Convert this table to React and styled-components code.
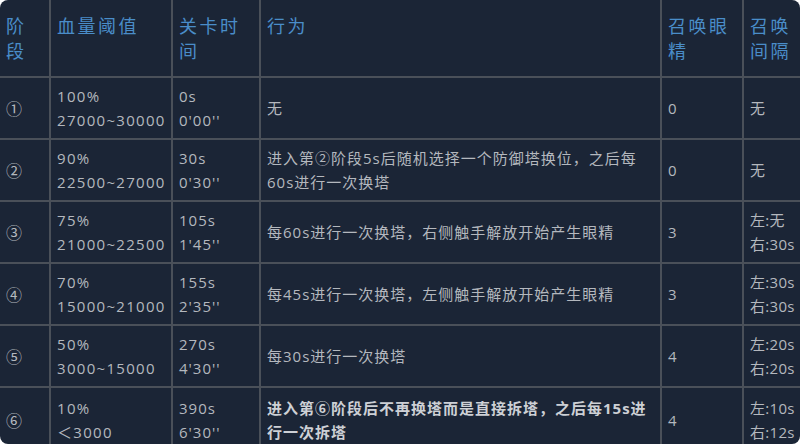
import React from "react";
import styled, { createGlobalStyle } from "styled-components";

const GlobalStyle = createGlobalStyle`
  html, body {
    margin: 0;
    padding: 0;
    background: #ffffff;
  }
`;

const Frame = styled.div`
  width: 800px;
  height: 444px;
  overflow: hidden;
  border-radius: 8px;
  background: #1b2536;
  font-family: "Open Sans", "Noto Sans CJK SC", sans-serif;
`;

const Table = styled.table`
  width: 800px;
  table-layout: fixed;
  border-collapse: collapse;
`;

const HeadCell = styled.th`
  height: 77px;
  box-sizing: border-box;
  padding: 14px 4px 0 6px;
  vertical-align: top;
  text-align: left;
  font-size: 18px;
  font-weight: 400;
  line-height: 25px;
  letter-spacing: 2.5px;
  color: #4a8dc9;
  border-right: 2px solid #4a5059;
  border-bottom: 2px solid #4a5059;
  &:last-child {
    border-right: none;
  }
`;

const Cell = styled.td`
  height: ${(p) => p.$h || 62}px;
  box-sizing: border-box;
  padding: 0 2px 0 6px;
  vertical-align: middle;
  font-size: 15px;
  line-height: 24px;
  letter-spacing: ${(p) => p.$ls ?? 1}px;
  color: ${(p) => (p.$bold ? "#cdd0d5" : "#b4b8be")};
  font-weight: ${(p) => (p.$bold ? 700 : 400)};
  border-right: 2px solid #4a5059;
  border-bottom: 2px solid #4a5059;
  white-space: ${(p) => (p.$nowrap ? "nowrap" : "normal")};
  &:last-child {
    border-right: none;
  }
`;

const Circle = styled.span`
  font-family: "Noto Sans CJK SC", sans-serif;
  font-size: 16px;
  letter-spacing: 0;
`;

const rows = [
  { n: "①", hp: ["100%", "27000~30000"], t: ["0s", "0'00''"], act: "无", eye: "0", gap: ["无"] },
  {
    n: "②",
    hp: ["90%", "22500~27000"],
    t: ["30s", "0'30''"],
    act: "进入第②阶段5s后随机选择一个防御塔换位，之后每60s进行一次换塔",
    eye: "0",
    gap: ["无"],
  },
  {
    n: "③",
    hp: ["75%", "21000~22500"],
    t: ["105s", "1'45''"],
    act: "每60s进行一次换塔，右侧触手解放开始产生眼精",
    eye: "3",
    gap: ["左:无", "右:30s"],
  },
  {
    n: "④",
    hp: ["70%", "15000~21000"],
    t: ["155s", "2'35''"],
    act: "每45s进行一次换塔，左侧触手解放开始产生眼精",
    eye: "3",
    gap: ["左:30s", "右:30s"],
  },
  {
    n: "⑤",
    hp: ["50%", "3000~15000"],
    t: ["270s", "4'30''"],
    act: "每30s进行一次换塔",
    eye: "4",
    gap: ["左:20s", "右:20s"],
  },
  {
    n: "⑥",
    hp: ["10%", "＜3000"],
    t: ["390s", "6'30''"],
    act: "进入第⑥阶段后不再换塔而是直接拆塔，之后每15s进行一次拆塔",
    eye: "4",
    gap: ["左:10s", "右:12s"],
    bold: true,
    h: 66,
  },
];

const Lines = ({ items }) =>
  items.map((s, i) => (
    <React.Fragment key={i}>
      {i > 0 && <br />}
      {s}
    </React.Fragment>
  ));

const App = () => {
  return (
    <Frame>
      <GlobalStyle />
      <Table>
        <colgroup>
          <col style={{ width: 50 }} />
          <col style={{ width: 122 }} />
          <col style={{ width: 88 }} />
          <col style={{ width: 401 }} />
          <col style={{ width: 82 }} />
          <col style={{ width: 57 }} />
        </colgroup>
        <thead>
          <tr>
            <HeadCell>阶段</HeadCell>
            <HeadCell>血量阈值</HeadCell>
            <HeadCell>关卡时间</HeadCell>
            <HeadCell>行为</HeadCell>
            <HeadCell>召唤眼精</HeadCell>
            <HeadCell>召唤间隔</HeadCell>
          </tr>
        </thead>
        <tbody>
          {rows.map((r) => (
            <tr key={r.n}>
              <Cell $h={r.h}>
                <Circle>{r.n}</Circle>
              </Cell>
              <Cell $h={r.h} $nowrap $ls={1.3}>
                <Lines items={r.hp} />
              </Cell>
              <Cell $h={r.h} $nowrap>
                <Lines items={r.t} />
              </Cell>
              <Cell $h={r.h} $bold={r.bold}>
                {r.act}
              </Cell>
              <Cell $h={r.h}>{r.eye}</Cell>
              <Cell $h={r.h} $nowrap $ls={0.3}>
                <Lines items={r.gap} />
              </Cell>
            </tr>
          ))}
        </tbody>
      </Table>
    </Frame>
  );
};

export default App;
